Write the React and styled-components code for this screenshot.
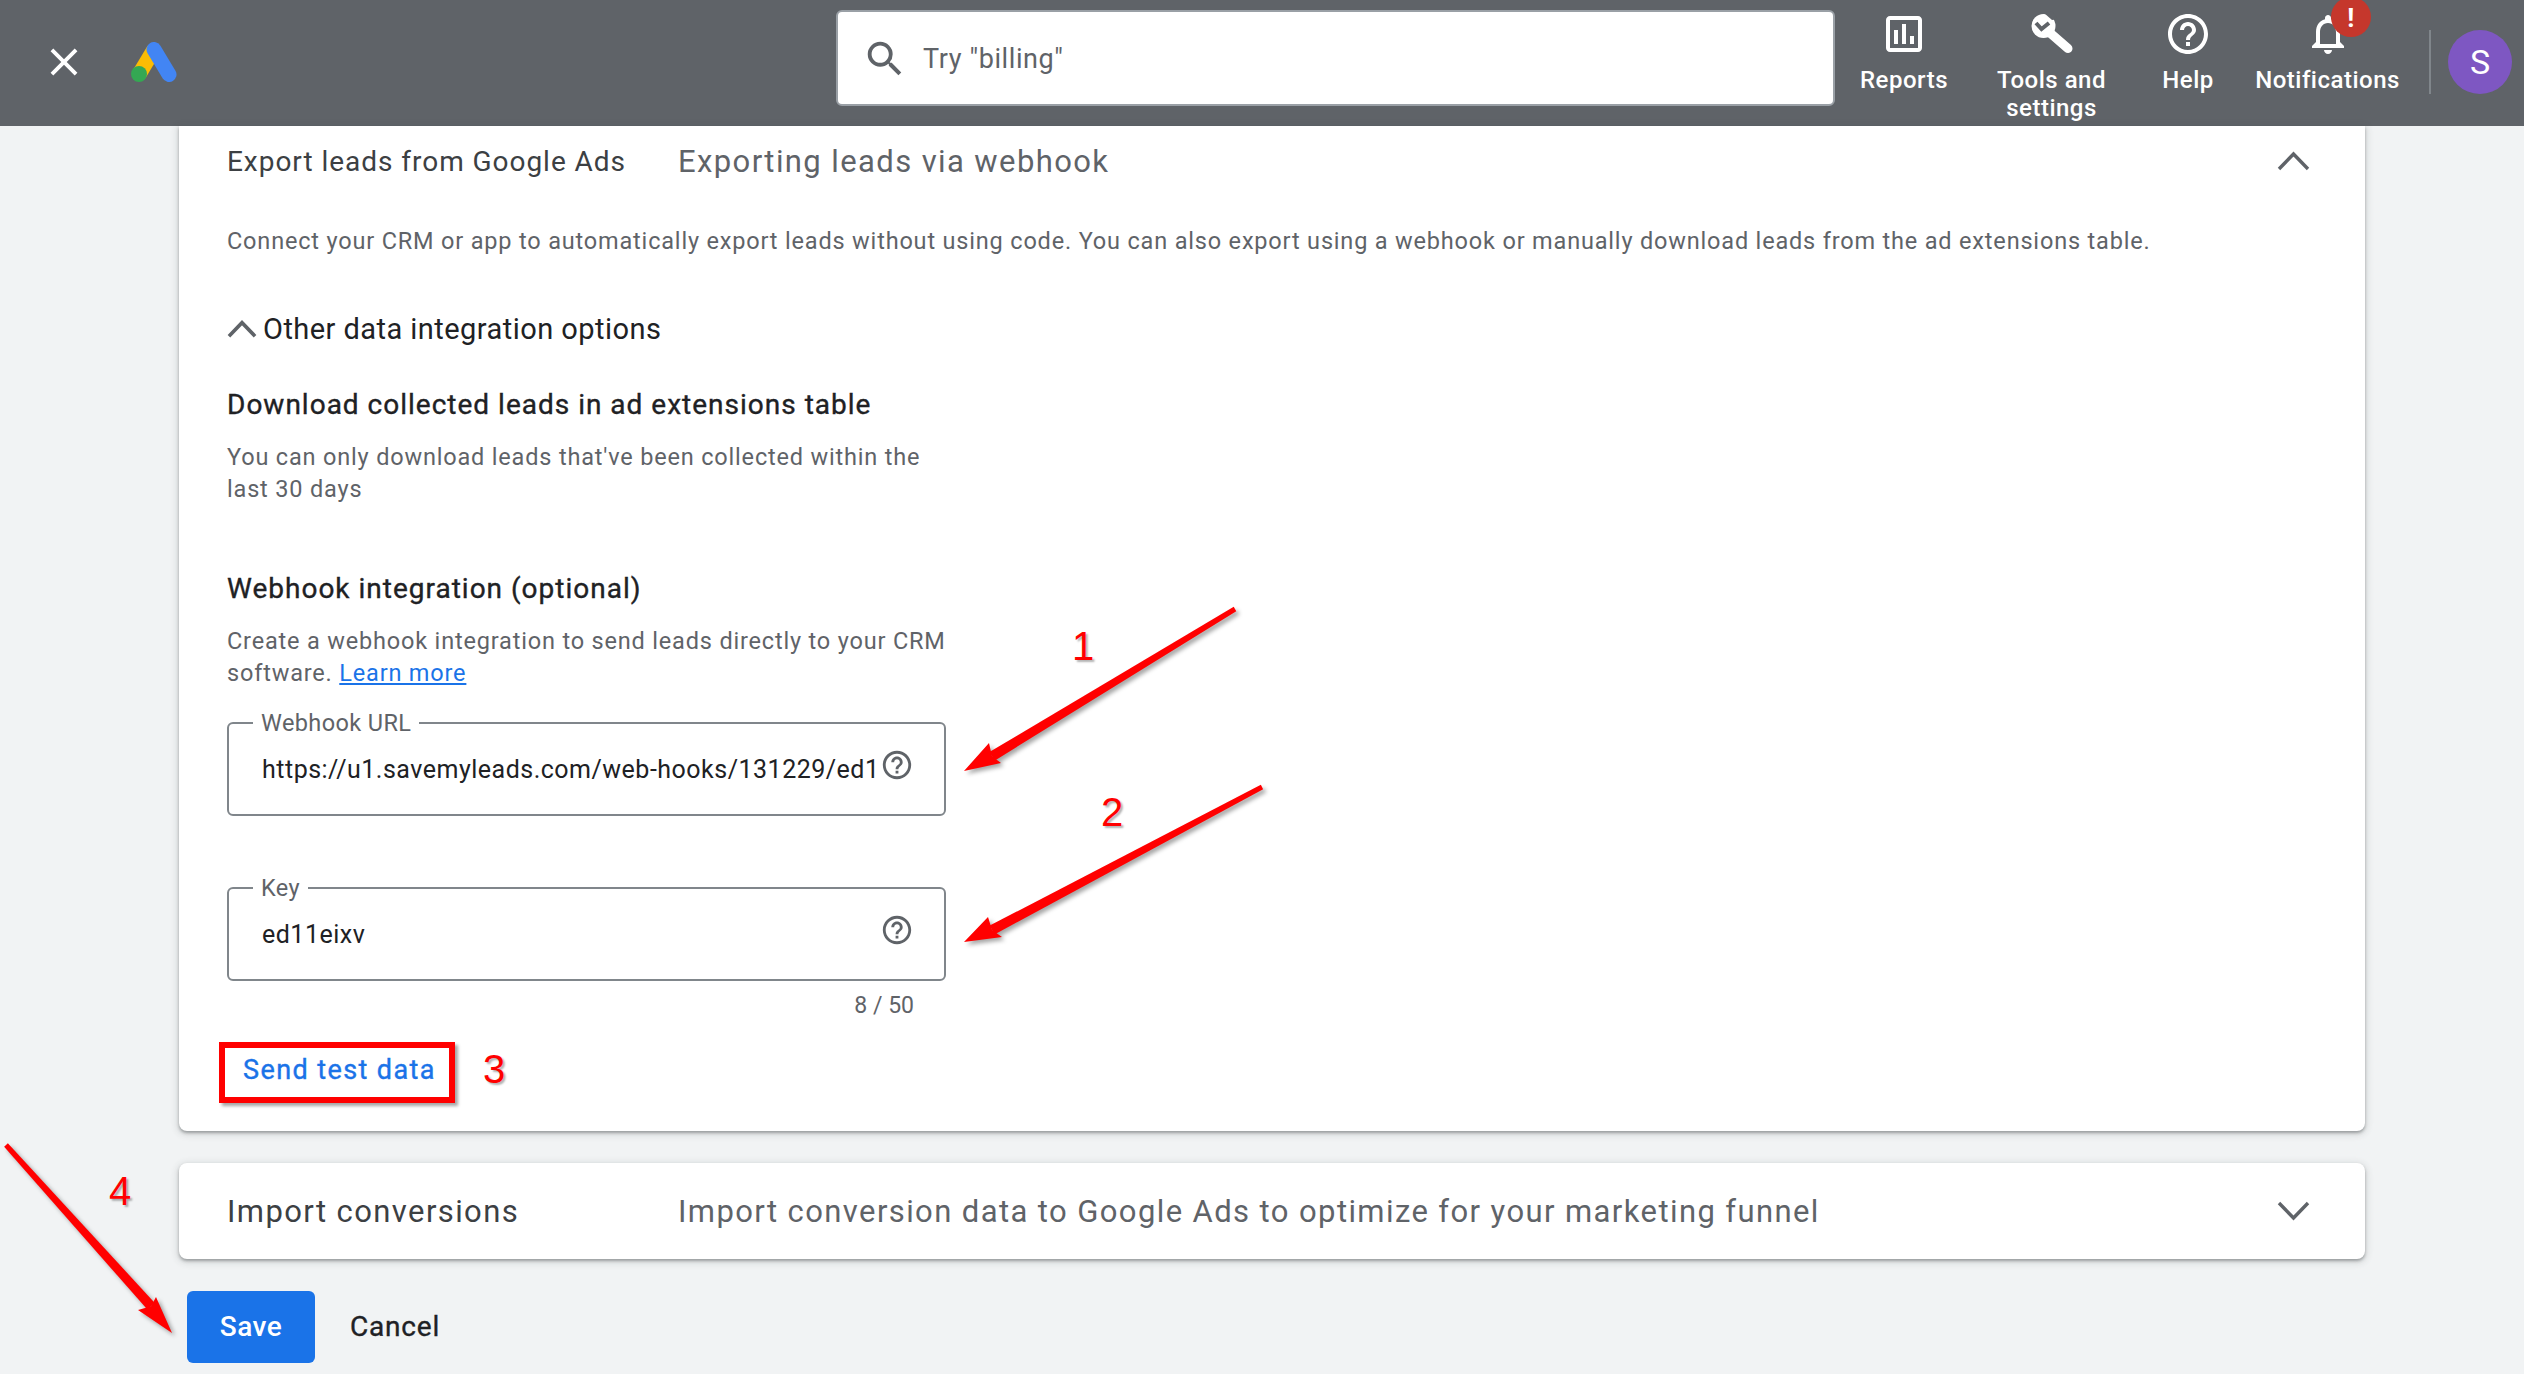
import styled, { createGlobalStyle } from "styled-components";
import {
  MdClose,
  MdSearch,
  MdOutlineAssessment,
  MdHelpOutline,
  MdNotificationsNone,
} from "react-icons/md";

const GlobalStyle = createGlobalStyle`
  html, body {
    margin: 0;
    padding: 0;
    background: #f1f3f4;
    font-family: Roboto, "Liberation Sans", sans-serif;
  }
  * { box-sizing: border-box; }
`;

const Page = styled.div`
  position: relative;
  width: 2524px;
  height: 1374px;
  overflow: hidden;
  background: #f1f3f4;
`;

const TopBar = styled.header`
  display: flex;
  align-items: flex-start;
  height: 126px;
  background: #5f6368;
  color: #fff;
`;

const BarLeft = styled.div`
  display: flex;
  align-items: center;
  width: 836px;
  height: 124px;
  padding-left: 41px;
`;

const Logo = styled.svg`
  width: 46px;
  height: 40px;
  margin-left: 44px;
`;

const SearchBox = styled.div`
  display: flex;
  align-items: center;
  gap: 15px;
  width: 999px;
  height: 96px;
  margin-top: 10px;
  padding: 2px 0 0 24px;
  background: #fff;
  border: 2px solid #9aa0a6;
  border-radius: 6px;
  color: #5f6368;
  font-size: 27px;
  letter-spacing: 0.6px;
`;

const NavList = styled.nav`
  display: flex;
  margin-left: 8px;
`;

const NavItem = styled.div`
  position: relative;
  display: flex;
  flex-direction: column;
  align-items: center;
  width: ${(p) => p.$width}px;
  padding-top: 10px;
  font-size: 24px;
  font-weight: 500;
  letter-spacing: 0.5px;
  line-height: 28px;
  text-align: center;
  svg { display: block; margin-bottom: 8px; }
`;

const NavLabel = styled.span`
  display: block;
  width: 150px;
`;

const Badge = styled.span`
  position: absolute;
  top: -3px;
  left: 93px;
  width: 40px;
  height: 40px;
  border-radius: 50%;
  background: #c5372c;
  font-size: 26px;
  font-weight: 700;
  line-height: 42px;
`;

const BarDivider = styled.div`
  width: 2px;
  height: 64px;
  margin: 30px 17px 0 12px;
  background: #80868b;
`;

const Avatar = styled.div`
  width: 64px;
  height: 64px;
  margin-top: 30px;
  border-radius: 50%;
  background: #7e57c2;
  font-size: 34px;
  line-height: 64px;
  text-align: center;
`;

const Main = styled.main`
  width: 2186px;
  margin-left: 179px;
`;

const Card = styled.section`
  padding: ${(p) => (p.$flatTop ? "0 48px 31px" : "0 48px")};
  background: #fff;
  border-radius: ${(p) => (p.$flatTop ? "0 0 8px 8px" : "8px")};
  box-shadow: 0 2px 3px rgba(60, 64, 67, 0.4), 0 2px 7px 2px rgba(60, 64, 67, 0.14);
`;

const CardHeader = styled.div`
  display: flex;
  align-items: center;
  height: ${(p) => p.$height}px;
`;

const CardTitle = styled.h2`
  width: 451px;
  margin: 0;
  color: #3c4043;
  font-size: ${(p) => (p.$small ? 28 : 31)}px;
  font-weight: 400;
  letter-spacing: ${(p) => (p.$small ? 0.96 : 1.4)}px;
`;

const CardSummary = styled.span`
  flex: 1;
  color: #5f6368;
  font-size: 31px;
  letter-spacing: 1.4px;
`;

const Chevron = styled.svg`
  width: 33px;
  height: 20px;
  margin-right: 7px;
  fill: none;
  stroke: #5f6368;
  stroke-width: 3.4;
`;

const SmallChevron = styled(Chevron)`
  width: 30px;
  height: 18px;
  margin-right: 0;
  stroke-width: 4;
`;

const BodyText = styled.p`
  width: ${(p) => (p.$wide ? "auto" : "725px")};
  margin: ${(p) => p.$top}px 0 0;
  color: #5f6368;
  font-size: 23.5px;
  line-height: 32px;
  letter-spacing: 0.82px;
`;

const Disclosure = styled.div`
  display: flex;
  align-items: center;
  gap: 6px;
  height: 32px;
  margin-top: 56px;
  color: #202124;
  font-size: 29px;
  letter-spacing: 0.45px;
`;

const SectionTitle = styled.h3`
  margin: ${(p) => p.$top}px 0 0;
  color: #202124;
  font-size: 28px;
  font-weight: 400;
  line-height: 32px;
  letter-spacing: 1px;
  -webkit-text-stroke: 0.35px #202124;
`;

const LearnMore = styled.a`
  color: #1a73e8;
  text-decoration: underline;
`;

const Field = styled.div`
  position: relative;
  display: flex;
  align-items: center;
  width: 719px;
  height: 94px;
  margin-top: ${(p) => p.$top}px;
  padding: 0 30px 0 33px;
  border: 2px solid #80868b;
  border-radius: 6px;
  color: #202124;
  font-size: 25px;
  letter-spacing: 0.5px;
`;

const FieldLabel = styled.span`
  position: absolute;
  top: -15px;
  left: 24px;
  padding: 0 8px;
  background: #fff;
  color: #5f6368;
  font-size: 23.5px;
  line-height: 28px;
  letter-spacing: 0.4px;
`;

const FieldValue = styled.span`
  white-space: nowrap;
`;

const FieldHelp = styled(MdHelpOutline)`
  flex: none;
  margin: -8px 0 0 auto;
  color: #5f6368;
`;

const Counter = styled.div`
  width: 687px;
  margin-top: 13px;
  color: #5f6368;
  font-size: 23px;
  line-height: 24px;
  text-align: right;
`;

const TextButton = styled.button`
  display: block;
  height: 60px;
  margin: 22px 0 0 16px;
  padding: 0;
  border: 0;
  background: none;
  color: #1a73e8;
  font: 400 27px Roboto, sans-serif;
  letter-spacing: 1.4px;
  -webkit-text-stroke: 0.4px #1a73e8;
`;

const SecondCard = styled(Card)`
  margin-top: 32px;
`;

const Actions = styled.div`
  display: flex;
  align-items: center;
  gap: 35px;
  margin: 32px 0 0 8px;
`;

const PrimaryButton = styled.button`
  width: 128px;
  height: 72px;
  padding: 0 0 2px;
  border: 0;
  border-radius: 6px;
  background: #1a73e8;
  color: #fff;
  font: 500 28px Roboto, sans-serif;
  letter-spacing: 0.5px;
`;

const PlainButton = styled.button`
  padding: 0 0 2px;
  border: 0;
  background: none;
  color: #202124;
  font: 400 28px Roboto, sans-serif;
  letter-spacing: 0.8px;
  -webkit-text-stroke: 0.35px #202124;
`;

const Arrows = styled.svg`
  position: absolute;
  top: 0;
  left: 0;
  pointer-events: none;
  filter: drop-shadow(3px 3px 2px rgba(0, 0, 0, 0.35));
`;

const Highlight = styled.div`
  position: absolute;
  top: 1042px;
  left: 219px;
  width: 236px;
  height: 61px;
  border: 6px solid #f00;
  box-shadow: 3px 3px 3px rgba(0, 0, 0, 0.35);
`;

const StepNumber = styled.span`
  position: absolute;
  top: ${(p) => p.$y}px;
  left: ${(p) => p.$x}px;
  color: #f00;
  font: 40px/40px "Liberation Sans", sans-serif;
  text-shadow: 2px 2px 2px rgba(0, 0, 0, 0.3);
`;

// shaft tapers from a thin tail to a thick neck, like the annotation tool draws it
function ArrowMark({ tail, tip, barbs }) {
  const neck = [
    barbs[0][0] + (barbs[1][0] - barbs[0][0]) / 2 + (tip[0] - barbs[0][0]) * 0.12,
    barbs[0][1] + (barbs[1][1] - barbs[0][1]) / 2 + (tip[1] - barbs[0][1]) * 0.12,
  ];
  const dx = neck[0] - tail[0];
  const dy = neck[1] - tail[1];
  const len = Math.hypot(dx, dy);
  const nx = -dy / len;
  const ny = dx / len;
  const shaft = [
    [tail[0] + nx * 2.5, tail[1] + ny * 2.5],
    [neck[0] + nx * 5, neck[1] + ny * 5],
    [neck[0] - nx * 5, neck[1] - ny * 5],
    [tail[0] - nx * 2.5, tail[1] - ny * 2.5],
  ];
  const head = [tip, barbs[0], neck, barbs[1]];
  const toPoints = (list) => list.map((p) => p.join(",")).join(" ");
  return (
    <g fill="#f00">
      <polygon points={toPoints(shaft)} />
      <polygon points={toPoints(head)} />
    </g>
  );
}

function WrenchIcon({ size }) {
  return (
    <svg width={size} height={size} viewBox="0 0 48 48">
      <line x1="21" y1="22" x2="40" y2="38.5" stroke="#fff" strokeWidth="9" strokeLinecap="round" />
      <circle cx="15.5" cy="16" r="12" fill="#fff" />
      <polyline points="8,13 13.5,19 21,13" fill="none" stroke="#5f6368" strokeWidth="4" />
      <polygon points="16,3 24,1 30,9 24,10" fill="#5f6368" />
    </svg>
  );
}

const steps = [
  { n: 1, x: 1072, y: 626 },
  { n: 2, x: 1101, y: 792 },
  { n: 3, x: 483, y: 1049 },
  { n: 4, x: 109, y: 1171 },
];

const navItems = [
  { label: "Reports", width: 122, Icon: MdOutlineAssessment },
  { label: "Tools and settings", width: 173, Icon: WrenchIcon },
  { label: "Help", width: 100, Icon: MdHelpOutline },
  { label: "Notifications", width: 179, Icon: MdNotificationsNone, alert: true },
];

function App() {
  return (
    <Page>
      <GlobalStyle />
      <TopBar>
        <BarLeft>
          <MdClose size={46} />
          <Logo viewBox="0 0 46 40">
            <line x1="23" y1="7.5" x2="8" y2="32.5" stroke="#fbbc04" strokeWidth="15" />
            <line x1="23" y1="7.5" x2="38" y2="32.5" stroke="#4285f4" strokeWidth="15" strokeLinecap="round" />
            <circle cx="8" cy="32" r="8" fill="#34a853" />
          </Logo>
        </BarLeft>
        <SearchBox>
          <MdSearch size={46} />
          Try "billing"
        </SearchBox>
        <NavList>
          {navItems.map(({ label, width, Icon, alert }) => (
            <NavItem key={label} $width={width}>
              <Icon size={48} />
              <NavLabel>{label}</NavLabel>
              {alert && <Badge>!</Badge>}
            </NavItem>
          ))}
        </NavList>
        <BarDivider />
        <Avatar>S</Avatar>
      </TopBar>

      <Main>
        <Card $flatTop>
          <CardHeader $height={70}>
            <CardTitle $small>Export leads from Google Ads</CardTitle>
            <CardSummary>Exporting leads via webhook</CardSummary>
            <Chevron viewBox="0 0 33 20">
              <polyline points="2,18 16.5,3 31,18" />
            </Chevron>
          </CardHeader>
          <BodyText $wide $top={29}>
            Connect your CRM or app to automatically export leads without using code. You can also
            export using a webhook or manually download leads from the ad extensions table.
          </BodyText>
          <Disclosure>
            <SmallChevron viewBox="0 0 33 20">
              <polyline points="2,18 16.5,3 31,18" />
            </SmallChevron>
            Other data integration options
          </Disclosure>
          <SectionTitle $top={44}>Download collected leads in ad extensions table</SectionTitle>
          <BodyText $top={20}>
            You can only download leads that've been collected within the last 30 days
          </BodyText>
          <SectionTitle $top={68}>Webhook integration (optional)</SectionTitle>
          <BodyText $top={20}>
            Create a webhook integration to send leads directly to your CRM software.{" "}
            <LearnMore href="#">Learn more</LearnMore>
          </BodyText>
          <Field $top={33}>
            <FieldLabel>Webhook URL</FieldLabel>
            <FieldValue>https://u1.savemyleads.com/web-hooks/131229/ed1</FieldValue>
            <FieldHelp size={34} />
          </Field>
          <Field $top={71}>
            <FieldLabel>Key</FieldLabel>
            <FieldValue>ed11eixv</FieldValue>
            <FieldHelp size={34} />
          </Field>
          <Counter>8 / 50</Counter>
          <TextButton>Send test data</TextButton>
        </Card>

        <SecondCard>
          <CardHeader $height={96}>
            <CardTitle>Import conversions</CardTitle>
            <CardSummary>Import conversion data to Google Ads to optimize for your marketing funnel</CardSummary>
            <Chevron viewBox="0 0 33 20">
              <polyline points="2,2 16.5,17 31,2" />
            </Chevron>
          </CardHeader>
        </SecondCard>

        <Actions>
          <PrimaryButton>Save</PrimaryButton>
          <PlainButton>Cancel</PlainButton>
        </Actions>
      </Main>

      <Arrows width="2524" height="1374" viewBox="0 0 2524 1374">
        <ArrowMark tail={[1235, 609]} tip={[964, 771]} barbs={[[989, 743], [1001, 763]]} />
        <ArrowMark tail={[1262, 787]} tip={[964, 942]} barbs={[[988, 917], [1002, 937]]} />
        <ArrowMark tail={[6, 1145]} tip={[172, 1333]} barbs={[[138, 1310], [156, 1297]]} />
      </Arrows>
      <Highlight />
      {steps.map((s) => (
        <StepNumber key={s.n} $x={s.x} $y={s.y}>
          {s.n}
        </StepNumber>
      ))}
    </Page>
  );
}

export default App;
